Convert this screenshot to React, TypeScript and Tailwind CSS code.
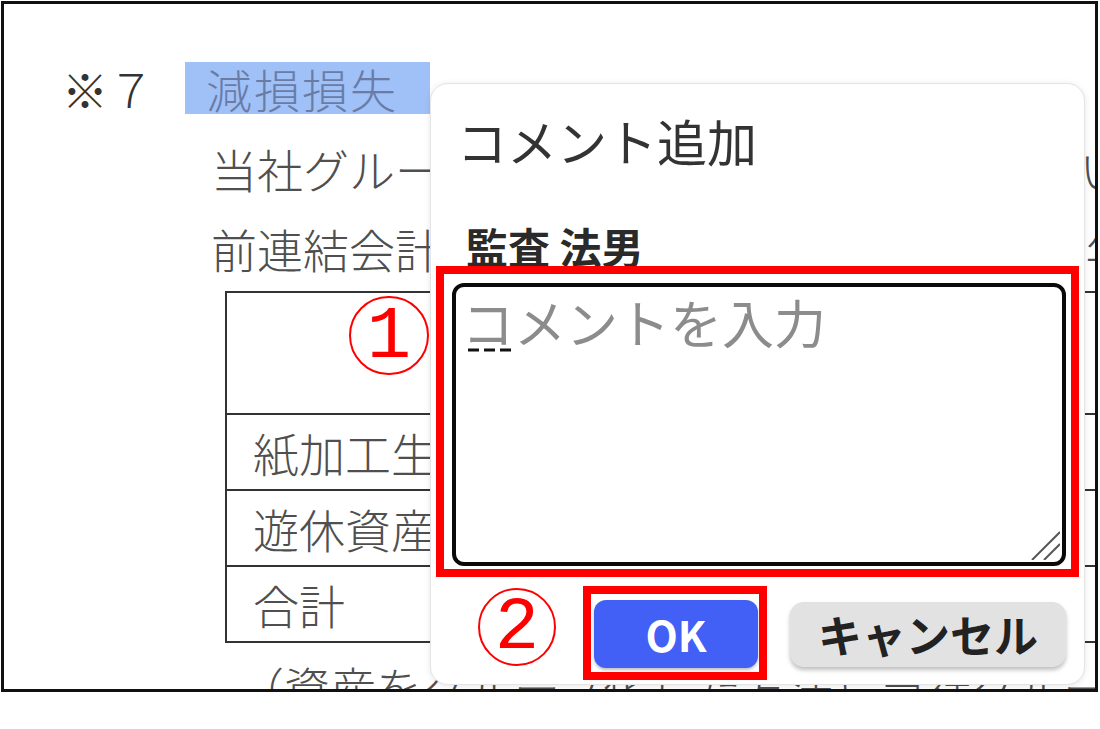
import React from "react";

const jp = "font-['Noto_Sans_CJK_JP','Noto_Sans',sans-serif]";

function Circled({ n, className }: { n: string; className: string }) {
  return (
    <div
      className={`absolute rounded-full border-2 border-[#ff0000] flex items-center justify-center text-[#ff0000] font-['Liberation_Mono',monospace] text-[74px] leading-none ${className}`}
    >
      <span className="mt-[2px]">{n}</span>
    </div>
  );
}

export default function App() {
  return (
    <div className={`w-[1100px] h-[729px] bg-white pt-[1px] pl-[1px] ${jp}`}>
      <div className="relative w-[1097px] h-[691px] border-[3px] border-[#111] overflow-hidden bg-white">
        {/* document */}
        <div className="pt-[44px] text-[46px] font-light text-[#4f4f4f] whitespace-nowrap">
          <div className="flex items-center h-[80px]">
            <span className="ml-[58px] leading-[80px] text-[#333]">※７</span>
            <span className="ml-[31px] h-[52px] w-[245px] bg-[#a0c1f8] pl-[21px] leading-[52px] tracking-[2px] text-[#6a7ca6]">
              減損損失
            </span>
          </div>
          <div className="pl-[207px] leading-[80px]">
            当社グループは、以下の資産グループについて減損損失を計上し
          </div>
          <div className="pl-[207px] leading-[80px]">
            前連結会計年度（自 2021年4月1日 至 2022年3月
          </div>
          <div className="ml-[221px] mt-[3px] w-[1200px] border-t-2 border-l-2 border-[#333]">
            <div className="flex h-[122px] border-b-2 border-[#333]">
              <div className="w-[470px] border-r-2 border-[#333]"></div>
              <div className="w-[260px] border-r-2 border-[#333] flex items-center justify-center">場所</div>
              <div className="flex-1"></div>
            </div>
            {[
              ["紙加工生産設備", "北海道"],
              ["遊休資産", "千葉県"],
              ["合計", ""],
            ].map((r, i) => (
              <div key={i} className="flex h-[76px] border-b-2 border-[#333]">
                <div className="w-[470px] border-r-2 border-[#333] flex items-center pl-[26px]">{r[0]}</div>
                <div className="w-[260px] border-r-2 border-[#333] flex items-center pl-[20px]">{r[1]}</div>
                <div className="flex-1"></div>
              </div>
            ))}
          </div>
          <div className="pl-[234px] mt-[3px] leading-[80px]">
            （資産をグループ化した方法）当社グループは事業用
          </div>
        </div>

        {/* dialog */}
        <div className="absolute left-[426px] top-[79px] w-[655px] h-[602px] bg-white rounded-[18px] border border-[#e4e4e4] shadow-[0_1px_6px_rgba(0,0,0,0.10)]">
          <div className="pt-[26px] flex flex-col">
            <div className="ml-[26px] text-[50px] leading-[60px] text-[#333]">コメント追加</div>
            <div className="ml-[35px] mt-[51px] text-[42px] leading-[50px] font-bold text-[#2a2a2a]">監査 法男</div>
            <div className="relative ml-[21px] mt-[12px] w-[614px] h-[283px] border-4 border-[#0a0a0a] rounded-[12px] bg-white">
              <div className="pl-[6px] pt-[4px] text-[52px] leading-[62px] text-[#8c8c8c]">コメントを入力</div>
              <svg className="absolute left-[12px] top-[61px]" width="46" height="4" viewBox="0 0 46 4">
                <line x1="0" y1="2" x2="46" y2="2" stroke="#111" strokeWidth="3" strokeDasharray="11 5" />
              </svg>
              <svg className="absolute right-[2px] bottom-[2px]" width="30" height="30" viewBox="0 0 30 30">
                <line x1="2" y1="30" x2="30" y2="2" stroke="#555" strokeWidth="2" />
                <line x1="14" y1="30" x2="30" y2="14" stroke="#555" strokeWidth="2" />
              </svg>
            </div>
            <div className="ml-[163px] mt-[34px] flex items-center gap-[32px]">
              <div className="w-[164px] h-[68px] rounded-[12px] bg-[#4260f6] shadow-[0_2px_3px_rgba(0,0,0,0.25)] flex items-center justify-center text-white font-bold text-[42px] leading-none">
                OK
              </div>
              <div className="w-[276px] h-[65px] rounded-[14px] bg-[#e2e2e2] shadow-[0_3px_4px_rgba(0,0,0,0.25)] flex items-center justify-center text-[#222] font-bold text-[44px] leading-none">
                キャンセル
              </div>
            </div>
          </div>
        </div>

        {/* annotations */}
        <div className="absolute left-[432px] top-[262px] w-[643px] h-[311px] border-[8px] border-[#ff0000]"></div>
        <div className="absolute left-[579px] top-[582px] w-[184px] h-[94px] border-[8px] border-[#ff0000]"></div>
        <Circled n="1" className="left-[345px] top-[292px] w-[80px] h-[79px]" />
        <Circled n="2" className="left-[474px] top-[584px] w-[78px] h-[78px]" />
      </div>
    </div>
  );
}
